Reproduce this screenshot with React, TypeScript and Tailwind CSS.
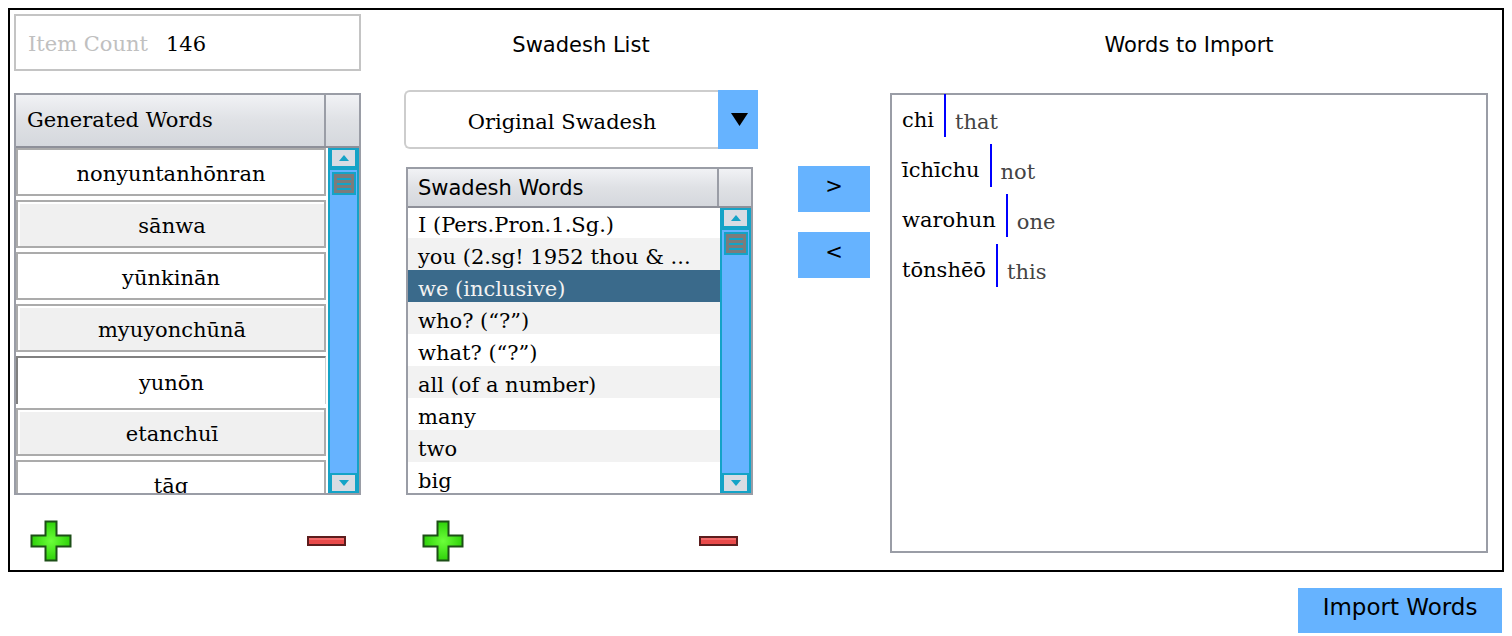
import React from "react";

const serif = "font-['DejaVu_Serif',serif]";
const sans = "font-['DejaVu_Sans',sans-serif]";

const generated = ["nonyuntanhōnran", "sānwa", "yūnkinān", "myuyonchūnā", "yunōn", "etanchuī", "tāq"];

const swadesh = [
  "I (Pers.Pron.1.Sg.)",
  "you (2.sg! 1952 thou & ...",
  "we (inclusive)",
  "who? (“?”)",
  "what? (“?”)",
  "all (of a number)",
  "many",
  "two",
  "big",
];

const imports = [
  { word: "chi", meaning: "that" },
  { word: "īchīchu", meaning: "not" },
  { word: "warohun", meaning: "one" },
  { word: "tōnshēō", meaning: "this" },
];

function PlusIcon() {
  return (
    <svg width="42" height="42" viewBox="0 0 42 42">
      <defs>
        <radialGradient id="pg" cx="50%" cy="50%" r="60%">
          <stop offset="0%" stopColor="#6cff3a" />
          <stop offset="100%" stopColor="#22c800" />
        </radialGradient>
      </defs>
      <path
        d="M15.5 1.5 H26.5 V15.5 H40.5 V26.5 H26.5 V40.5 H15.5 V26.5 H1.5 V15.5 H15.5 Z"
        fill="url(#pg)"
        stroke="#1d4f17"
        strokeWidth="2"
        strokeLinejoin="miter"
      />
    </svg>
  );
}

function MinusIcon() {
  return (
    <svg width="39" height="10" viewBox="0 0 39 10">
      <rect x="1" y="1" width="37" height="8" fill="#e94a4a" stroke="#5c1d1d" strokeWidth="2" />
      <rect x="2" y="2" width="35" height="2" fill="#f26a6a" />
    </svg>
  );
}

function ScrollBtn({ down }: { down?: boolean }) {
  return (
    <div className="flex h-[20px] shrink-0 items-center justify-center border-2 border-[#14a3c7] bg-[#d8dce3]">
      <svg width="10" height="6" viewBox="0 0 10 6">
        {down ? <path d="M0 0 H10 L5 6 Z" fill="#14a3c7" /> : <path d="M5 0 L10 6 H0 Z" fill="#14a3c7" />}
      </svg>
    </div>
  );
}

function ScrollBar() {
  return (
    <div className="flex h-full w-[31px] shrink-0 flex-col border-l-2 border-r-2 border-[#14a3c7] bg-[#66b3ff]">
      <ScrollBtn />
      <div className="flex-1 border-t-2 border-[#14a3c7] pt-[2px]">
        <div className="mx-auto flex h-[23px] w-[24px] flex-col justify-center gap-[3px] border-2 border-[#14a3c7] bg-[#7c7c7c] px-[3px]">
          <div className="h-[2px] bg-[#14a3c7]" />
          <div className="h-[2px] bg-[#14a3c7]" />
          <div className="h-[2px] bg-[#14a3c7]" />
        </div>
      </div>
      <ScrollBtn down />
    </div>
  );
}

function GenRow({ text, index }: { text: string; index: number }) {
  if (index === 4) {
    return (
      <div className="flex h-[48px] shrink-0 items-center justify-center border-t-2 border-l-2 border-r border-t-[#808080] border-l-[#808080] border-r-[#cfcfcf] bg-white pt-[5px] text-[21px] leading-none text-black">
        {text}
      </div>
    );
  }
  if (index % 2 === 1) {
    return (
      <div className="h-[48px] shrink-0 border-2 border-[#ababab] bg-white pl-[2px] pt-[2px]">
        <div className="flex h-full items-center justify-center bg-[#f0f0f0] pt-[3px] text-[21px] leading-none text-black">
          {text}
        </div>
      </div>
    );
  }
  return (
    <div className="flex h-[48px] shrink-0 items-center justify-center border-2 border-[#ababab] bg-white pt-[5px] text-[21px] leading-none text-black">
      {text}
    </div>
  );
}

export default function App() {
  return (
    <div className={`min-h-screen bg-white ${serif}`}>
      <div className="p-2">
        {/* main panel */}
        <div className="flex h-[564px] border-2 border-black pl-[4px] pt-[4px]">
          {/* generated words column */}
          <div className="flex w-[347px] flex-col">
            <div className="flex h-[57px] items-center border-2 border-[#c4c4c4] pl-[12px] pt-[4px] text-[21px] leading-none">
              <span className="text-[#c0c0c0]">Item Count</span>
              <span className="ml-[18px] text-black">146</span>
            </div>

            <div className="mt-[22px] flex h-[402px] flex-col border-2 border-[#9a9da6]">
              <div className="flex h-[53px] shrink-0 border-b-2 border-[#8e9099] bg-linear-to-b from-[#f1f2f5] via-[#dfe1e5] to-[#d5d8dd]">
                <div className="flex w-[310px] items-center border-r-2 border-[#9a9da6] pl-[11px] text-[21px] leading-none text-black">
                  Generated Words
                </div>
                <div className="flex-1" />
              </div>
              <div className="flex min-h-0 flex-1 gap-[2px]">
                <div className="flex w-[310px] flex-col gap-[4px] overflow-hidden">
                  {generated.map((g, i) => (
                    <GenRow key={g} text={g} index={i} />
                  ))}
                </div>
                <ScrollBar />
              </div>
            </div>

            <div className="mt-[25px] flex h-[42px] items-center justify-between pl-[16px] pr-[15px]">
              <PlusIcon />
              <MinusIcon />
            </div>
          </div>

          {/* swadesh column */}
          <div className="ml-[43px] flex w-[354px] flex-col">
            <div className={`flex h-[57px] items-center justify-center pt-[5px] text-[21px] leading-none text-black ${sans}`}>
              Swadesh List
            </div>
            <div className="mt-[19px] flex h-[59px]">
              <div className="flex flex-1 items-center justify-center rounded-l-[6px] border-2 border-r-0 border-[#cdcdcd] pt-[6px] text-[21px] leading-none text-black">
                Original Swadesh
              </div>
              <div className="flex w-[40px] items-center justify-center bg-[#66b3ff] pl-[2px]">
                <svg width="17" height="13" viewBox="0 0 17 13">
                  <path d="M0 0 H17 L8.5 13 Z" fill="#000" />
                </svg>
              </div>
            </div>

            <div className="ml-[2px] mt-[18px] flex h-[328px] w-[347px] flex-col border-2 border-[#9a9da6]">
              <div className="flex h-[39px] shrink-0 border-b-2 border-[#8e9099] bg-linear-to-b from-[#f1f2f5] via-[#dfe1e5] to-[#d5d8dd]">
                <div className={`flex w-[311px] items-center border-r-2 border-[#9a9da6] pl-[10px] pt-[2px] text-[21px] leading-none text-black ${sans}`}>
                  Swadesh Words
                </div>
                <div className="flex-1" />
              </div>
              <div className="flex min-h-0 flex-1">
                <div className="w-[312px] overflow-hidden">
                  <div className="-mt-[2px]">
                    {swadesh.map((s, i) => (
                      <div
                        key={s}
                        className={`h-[32px] whitespace-nowrap pl-[10px] pt-[7px] text-[21px] leading-[24px] ${
                          i === 2 ? "bg-[#3a6a8b] text-[#f2f2f2]" : i % 2 === 1 ? "bg-[#f2f2f2] text-black" : "bg-white text-black"
                        }`}
                      >
                        {s}
                      </div>
                    ))}
                  </div>
                </div>
                <ScrollBar />
              </div>
            </div>

            <div className="mt-[25px] flex h-[42px] items-center justify-between pl-[18px] pr-[20px]">
              <PlusIcon />
              <MinusIcon />
            </div>
          </div>

          {/* move buttons */}
          <div className={`ml-[40px] flex w-[72px] flex-col pt-[152px] ${sans}`}>
            <div className="flex h-[46px] items-center justify-center bg-[#66b3ff] pb-[5px] text-[21px] leading-none text-black">
              &gt;
            </div>
            <div className="mt-[20px] flex h-[46px] items-center justify-center bg-[#66b3ff] pb-[5px] text-[21px] leading-none text-black">
              &lt;
            </div>
          </div>

          {/* words to import */}
          <div className="ml-[20px] flex w-[598px] flex-col">
            <div className={`flex h-[57px] items-center justify-center pt-[5px] text-[21px] leading-none text-black ${sans}`}>
              Words to Import
            </div>
            <div className="mt-[22px] h-[460px] border-2 border-[#9a9da6]">
              <div className="-mt-[1px] flex flex-col">
                {imports.map((w) => (
                  <div key={w.word} className="flex h-[50px] items-start pl-[10px]">
                    <span className="pt-[16px] text-[21px] leading-none text-black">{w.word}</span>
                    <span className="ml-[10px] h-[43px] w-[2px] bg-[#0000ff]" />
                    <span className="ml-[9px] pt-[18px] text-[21px] leading-none text-[#444444]">{w.meaning}</span>
                  </div>
                ))}
              </div>
            </div>
          </div>
        </div>

        <div className="mt-[16px] flex justify-end pr-[2px]">
          <div className={`flex h-[45px] w-[204px] items-center justify-center bg-[#66b3ff] pb-[6px] text-[23px] leading-none text-black ${sans}`}>
            Import Words
          </div>
        </div>
      </div>
    </div>
  );
}
